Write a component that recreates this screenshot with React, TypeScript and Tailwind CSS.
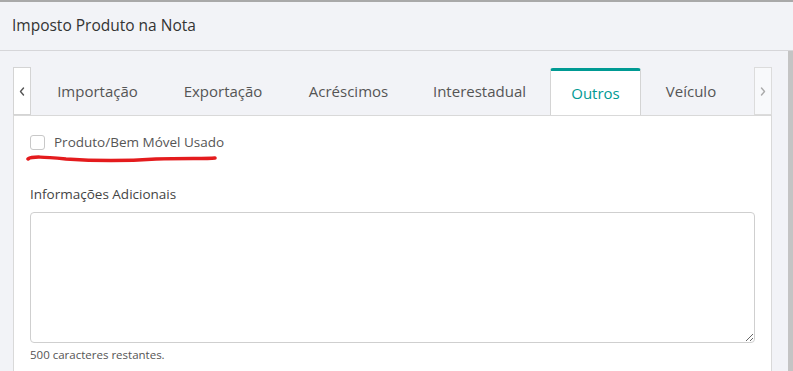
import React from "react";

const tabs = [
  { label: "Importação", w: "w-[121px]" },
  { label: "Exportação", w: "w-[122px]" },
  { label: "Acréscimos", w: "w-[121px]" },
  { label: "Interestadual", w: "w-[133px]" },
  { label: "Outros", w: "w-[91px]" },
  { label: "Veículo", w: "w-[92px]" },
];

function Chevron({ dir, color }: { dir: "left" | "right"; color: string }) {
  return (
    <svg width="6" height="9" viewBox="0 0 6 9" fill="none">
      <path
        d={dir === "left" ? "M4.5 1L1.5 4.5L4.5 8" : "M1.5 1L4.5 4.5L1.5 8"}
        stroke={color}
        strokeWidth="1.4"
        strokeLinecap="round"
        strokeLinejoin="round"
      />
    </svg>
  );
}

export default function App() {
  const active = "Outros";
  return (
    <div
      className="w-[793px] h-[371px] overflow-hidden bg-[#f2f3f7] border-t-2 border-[#a9a9a9] flex flex-col text-[#444]"
      style={{ fontFamily: "'Open Sans', 'Noto Sans', sans-serif" }}
    >
      {/* header */}
      <div className="h-[49px] shrink-0 border-b border-[#d6d6d9] px-3 flex items-center text-[15.5px] text-[#333]">
        Imposto Produto na Nota
      </div>

      <div className="flex flex-1 min-h-0">
        <div className="flex-1 pl-[13px] pr-[16px] pt-4 flex flex-col">
          {/* tab bar */}
          <div className="flex items-end h-[48px] shrink-0">
            <button className="w-[18px] h-[48px] bg-white border border-[#d4d4d4] flex items-center justify-center">
              <Chevron dir="left" color="#555" />
            </button>
            <div className="flex flex-1 items-end gap-1 pl-[6px] h-full">
              {tabs.map((t) =>
                t.label === active ? (
                  <div
                    key={t.label}
                    className={`${t.w} h-[47px] bg-white border-x border-[#d4d4d4] border-t-[3px] border-t-[#009a93] rounded-t-[3px] flex items-center justify-center text-[15px] text-[#009a93] font-medium`}
                  >
                    {t.label}
                  </div>
                ) : (
                  <div
                    key={t.label}
                    className={`${t.w} h-[47px] flex items-center justify-center text-[15px] text-[#555]`}
                  >
                    {t.label}
                  </div>
                )
              )}
            </div>
            <button className="w-[18px] h-[48px] bg-[#f8f9fb] border border-[#dcdcdc] flex items-center justify-center">
              <Chevron dir="right" color="#aaa" />
            </button>
          </div>

          {/* panel */}
          <div className="flex-1 bg-white border border-b-0 border-[#d9d9d9] px-[16px] pt-[16px]">
            <div className="relative">
              <label className="flex items-center gap-[9px] text-[13.5px] leading-[20px] text-[#555]">
                <span className="w-[15px] h-[15px] border border-[#c8c8c8] rounded-[3px] bg-white" />
                Produto/Bem Móvel Usado
              </label>
              {/* hand-drawn red underline */}
              <svg
                className="absolute left-[-4px] top-[21px]"
                width="194"
                height="10"
                viewBox="0 0 194 10"
                fill="none"
              >
                <path
                  d="M2 6 C 6 3, 18 4, 40 6 C 70 8, 100 8, 130 6 C 160 5, 180 6, 189 5"
                  stroke="#e41b1d"
                  strokeWidth="3.5"
                  strokeLinecap="round"
                />
              </svg>
            </div>

            <div className="mt-[32px] text-[13.5px] leading-[20px] text-[#444]">Informações Adicionais</div>
            <textarea className="mt-[8px] block w-full h-[131px] border border-[#cfcfcf] rounded-[4px] resize-y outline-none" />
            <div className="mt-[5px] text-[11.5px] leading-[14px] text-[#555]">500 caracteres restantes.</div>
          </div>
        </div>
        {/* scrollbar */}
        <div className="w-[5px] bg-[#c4c4c4]" />
      </div>
    </div>
  );
}
